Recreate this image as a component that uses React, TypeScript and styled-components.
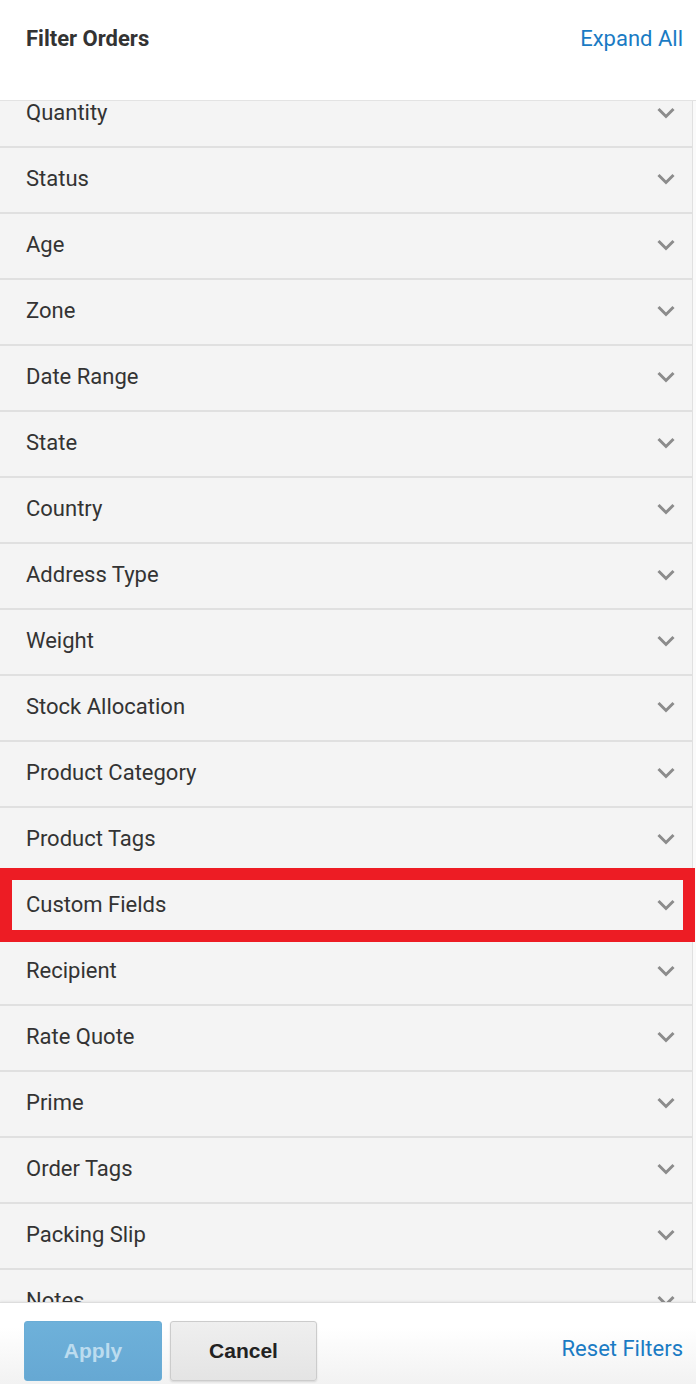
import React, { useLayoutEffect, useRef } from "react";
import styled, { createGlobalStyle } from "styled-components";

const GlobalStyle = createGlobalStyle`
  html, body {
    margin: 0;
    padding: 0;
    background: #ffffff;
  }
  * { box-sizing: border-box; }
`;

const Page = styled.div`
  width: 696px;
  height: 1384px;
  display: flex;
  flex-direction: column;
  background: #ffffff;
  font-family: Roboto, "Liberation Sans", Arial, sans-serif;
  overflow: hidden;
`;

const Header = styled.header`
  flex: 0 0 101px;
  display: flex;
  align-items: flex-start;
  justify-content: space-between;
  padding: 26px 13px 0 26px;
  background: #ffffff;
  border-bottom: 1px solid #e3e3e3;
`;

const Title = styled.h1`
  margin: 0;
  font-size: 22px;
  line-height: 26px;
  font-weight: 700;
  color: #333333;
`;

const LinkButton = styled.a`
  font-size: 22px;
  line-height: 26px;
  color: #1a7bc4;
  text-decoration: none;
  cursor: pointer;
`;

const List = styled.div`
  flex: 1 1 auto;
  overflow: hidden;
  background: #fafafa;
`;

const Row = styled.div`
  position: relative;
  width: 693px;
  height: 66px;
  display: flex;
  align-items: flex-start;
  justify-content: space-between;
  padding: 18px 16px 0 26px;
  background: #f4f4f4;
  border-bottom: 2px solid #e0e0e0;
  border-right: 1px solid #e0e0e0;
`;

const RowLabel = styled.span`
  font-size: 22px;
  line-height: 26px;
  color: #333333;
`;

const Chevron = styled.svg`
  margin-top: 7px;
  flex: 0 0 auto;
`;

const Highlight = styled.div`
  position: absolute;
  top: -6px;
  bottom: -4px;
  left: 0;
  right: -3px;
  border: 12px solid #ed1c24;
  pointer-events: none;
  z-index: 2;
`;

const Footer = styled.footer`
  flex: 0 0 82px;
  display: flex;
  align-items: flex-start;
  gap: 8px;
  padding: 18px 13px 0 24px;
  border-top: 1px solid #dddddd;
  background: linear-gradient(to bottom, #ffffff 0%, #ffffff 30%, #f2f2f2 100%);
  box-shadow: 0 -1px 2px rgba(0, 0, 0, 0.06);
  position: relative;
  z-index: 3;
`;

const Button = styled.button<{ $primary?: boolean }>`
  height: 60px;
  width: ${(p) => (p.$primary ? "138px" : "147px")};
  border-radius: 3px;
  font-family: "Liberation Sans", Arial, sans-serif;
  font-weight: 700;
  font-size: 21px;
  cursor: pointer;
  border: 1px solid ${(p) => (p.$primary ? "#6aadd6" : "#cccccc")};
  color: ${(p) => (p.$primary ? "#bcdcef" : "#222222")};
  background: ${(p) =>
    p.$primary
      ? "linear-gradient(to bottom, #6eb1da, #66a8d3)"
      : "linear-gradient(to bottom, #efefef, #e4e4e4)"};
  box-shadow: ${(p) => (p.$primary ? "none" : "0 1px 2px rgba(0,0,0,0.12)")};
`;

const ResetLink = styled(LinkButton)`
  margin-left: auto;
  margin-top: 15px;
`;

const filters = [
  "Quantity",
  "Status",
  "Age",
  "Zone",
  "Date Range",
  "State",
  "Country",
  "Address Type",
  "Weight",
  "Stock Allocation",
  "Product Category",
  "Product Tags",
  "Custom Fields",
  "Recipient",
  "Rate Quote",
  "Prime",
  "Order Tags",
  "Packing Slip",
  "Notes",
];

const ChevronIcon = () => (
  <Chevron width="20" height="12" viewBox="0 0 20 12">
    <polyline
      points="2.5,2 10,9.5 17.5,2"
      fill="none"
      stroke="#8c8c8c"
      strokeWidth="3"
    />
  </Chevron>
);

export default function App() {
  const listRef = useRef<HTMLDivElement>(null);
  useLayoutEffect(() => {
    if (listRef.current) listRef.current.scrollTop = 19;
  }, []);

  return (
    <>
      <GlobalStyle />
      <Page>
        <Header>
          <Title>Filter Orders</Title>
          <LinkButton>Expand All</LinkButton>
        </Header>
        <List ref={listRef}>
          {filters.map((f) => (
            <Row key={f}>
              <RowLabel>{f}</RowLabel>
              <ChevronIcon />
              {f === "Custom Fields" && <Highlight />}
            </Row>
          ))}
        </List>
        <Footer>
          <Button $primary>Apply</Button>
          <Button>Cancel</Button>
          <ResetLink>Reset Filters</ResetLink>
        </Footer>
      </Page>
    </>
  );
}
